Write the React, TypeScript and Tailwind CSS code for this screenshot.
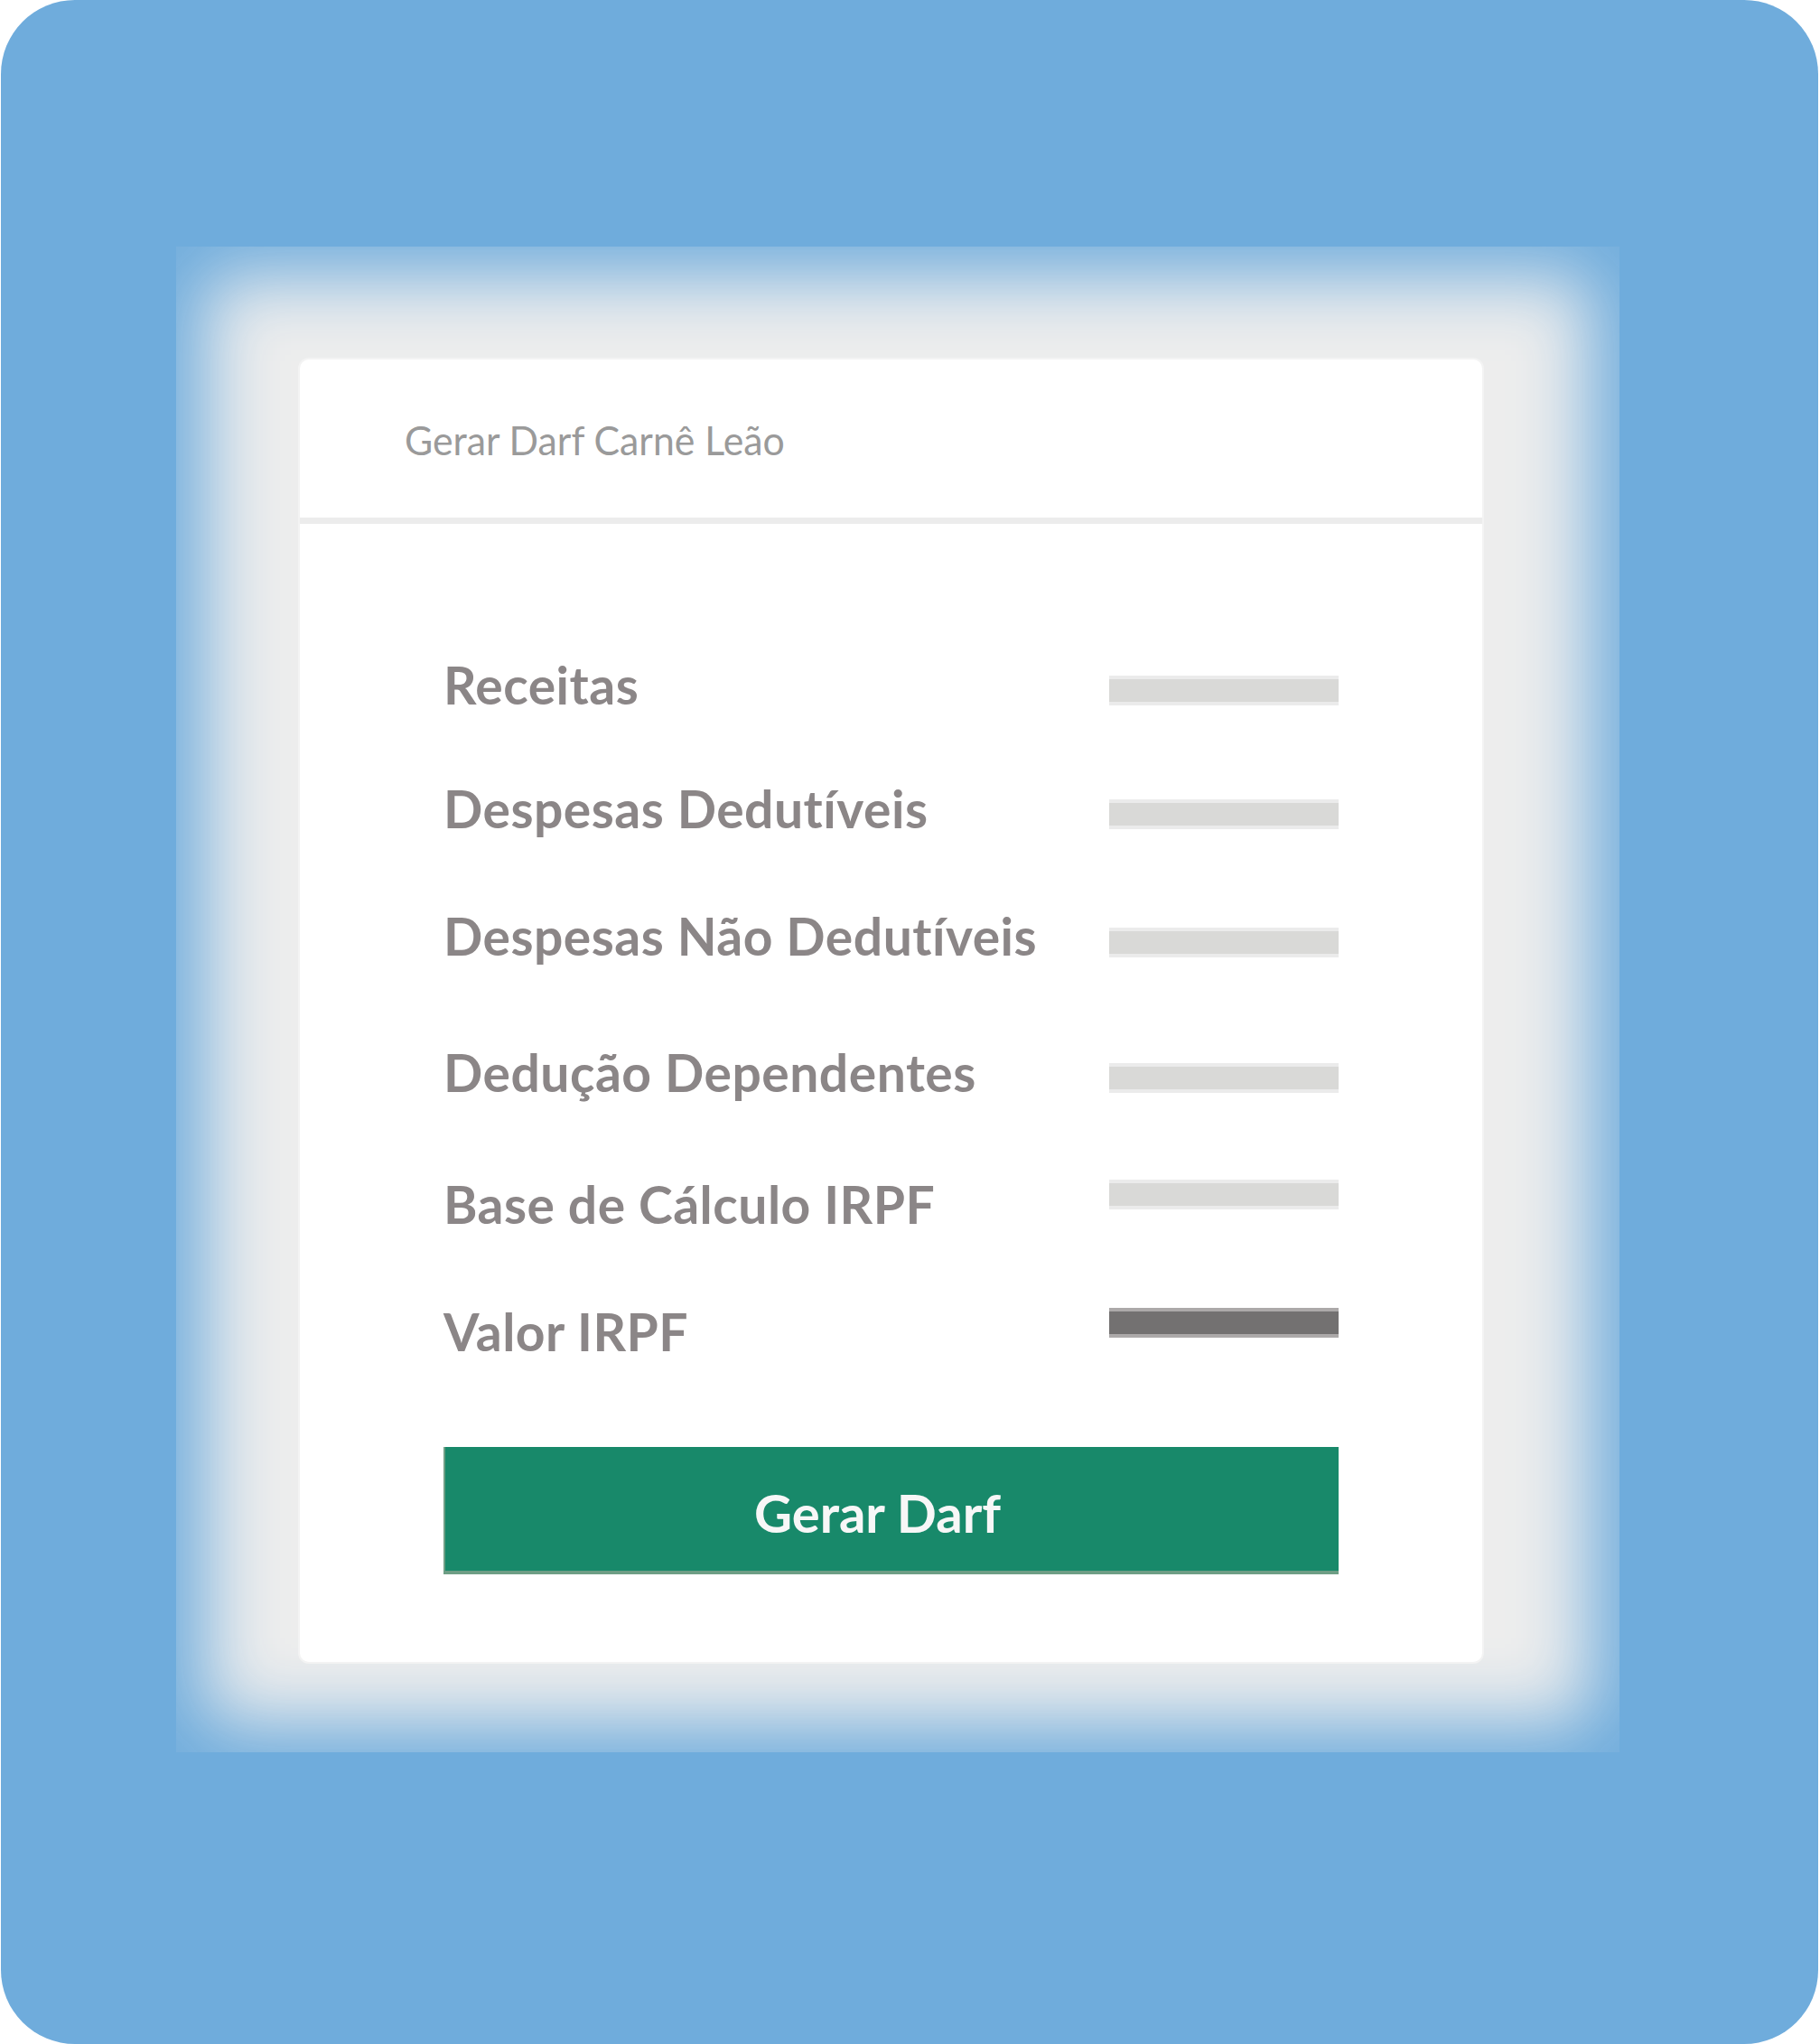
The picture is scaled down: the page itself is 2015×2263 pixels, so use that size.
import React from "react";

const rows = [
  { label: "Receitas", mt: "mt-0", barTop: "mt-[18px]", dark: false },
  { label: "Despesas Dedutíveis", mt: "mt-[80px]", barTop: "mt-[18px]", dark: false },
  { label: "Despesas Não Dedutíveis", mt: "mt-[84px]", barTop: "mt-[19px]", dark: false },
  { label: "Dedução Dependentes", mt: "mt-[94px]", barTop: "mt-[18px]", dark: false },
  { label: "Base de Cálculo IRPF", mt: "mt-[89px]", barTop: "mt-[1px]", dark: false },
  { label: "Valor IRPF", mt: "mt-[84px]", barTop: "mt-[2px]", dark: true },
];

export default function App() {
  return (
    <div className="w-[2015px] h-[2263px] bg-white" style={{ fontFamily: "Lato, 'Liberation Sans', sans-serif" }}>
      <div className="ml-px w-[2012px] h-[2263px] rounded-[82px] bg-[#6facdc] pt-[273px] pl-[194px]">
        <div className="w-[1598px] h-[1667px] bg-[#ededed] shadow-[inset_0_0_80px_32px_#6facdc] pt-[123px] pl-[135px]">
          <div className="w-[1313px] h-[1446px] bg-white rounded-[12px] border-2 border-[#f3f3f3] flex flex-col">
            <div className="h-[175px] pl-[116px] pt-[67px]">
              <span className="inline-block origin-left scale-x-[0.95] text-[45px] leading-none text-[#9a9a9a] font-normal whitespace-nowrap">
                Gerar Darf Carnê Leão
              </span>
            </div>
            <div className="h-[7px] bg-[#ececec]" />
            <div className="px-[159px] pt-[150px] flex flex-col">
              {rows.map((r) => (
                <div key={r.label} className={`flex items-start justify-between ${r.mt}`}>
                  <span className="block text-[57px] leading-none font-bold tracking-[0.5px] text-[#8b8687] whitespace-nowrap">
                    {r.label}
                  </span>
                  <div
                    className={`w-[254px] h-[33px] border-y-4 ${r.barTop} ${
                      r.dark ? "bg-[#737171] border-[#aca9a9]" : "bg-[#d9d9d7] border-[#ebebeb]"
                    }`}
                  />
                </div>
              ))}
              <button className="mt-[99px] h-[141px] w-full bg-[#18896a] border-l-2 border-b-4 border-[#6e9e85] flex items-center justify-center pr-[32px] pt-[8px]">
                <span className="text-[58px] leading-none font-bold text-[#f7f7f7]">Gerar Darf</span>
              </button>
            </div>
          </div>
        </div>
      </div>
    </div>
  );
}
